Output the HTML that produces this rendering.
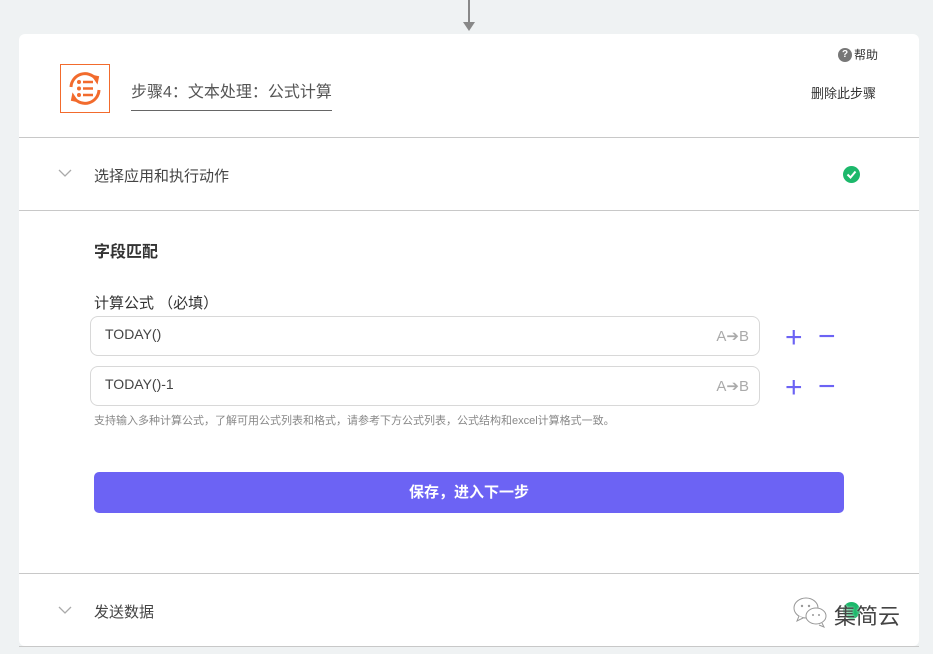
<!DOCTYPE html>
<html><head><meta charset="utf-8"><style>
*{margin:0;padding:0;box-sizing:border-box}
body{width:933px;height:654px;background:#eff2f3;font-family:"Liberation Sans","Noto Sans CJK SC",sans-serif;position:relative;overflow:hidden;color:#333}
.card{position:absolute;left:19px;top:34px;width:900px;height:612px;background:#fff;border-radius:6px}
.abs{position:absolute}
.line{position:absolute;left:0;width:900px;height:1px;background:#c8c8c8}
.inp{position:absolute;left:71px;width:670px;height:40px;border:1px solid #d8d8d8;border-radius:8px;font-size:14px;color:#444;padding:9px 0 0 14px}
.ab{position:absolute;right:10px;top:10px;color:#aaa;font-size:15px}
.pm{position:absolute;color:#6c63f4;font-size:30px;font-weight:300;line-height:20px}
</style></head><body>
<div class="abs" style="left:468px;top:0;width:2px;height:24px;background:#888"></div>
<div class="abs" style="left:463px;top:22px;width:0;height:0;border-left:6px solid transparent;border-right:6px solid transparent;border-top:9px solid #888"></div>
<div class="card">
 <div class="abs" style="left:41px;top:30px;width:50px;height:49px;border:1px solid #f26b2d">
  <svg width="48" height="47" viewBox="0 0 48 47" style="position:absolute;left:0;top:0">
   <path d="M10 22a14 14 0 0 1 25-8" fill="none" stroke="#f26b2d" stroke-width="3"/>
   <path d="M38 25a14 14 0 0 1-25 8" fill="none" stroke="#f26b2d" stroke-width="3"/>
   <path d="M32 11l5 1-1 5z M16 36l-5-1 1-5z" fill="#f26b2d" stroke="#f26b2d" stroke-width="2"/>
   <circle cx="18" cy="17" r="2" fill="#f26b2d"/><circle cx="18" cy="23.5" r="2" fill="#f26b2d"/><circle cx="18" cy="30" r="2" fill="#f26b2d"/>
   <path d="M22 17h10M22 23.5h10M22 30h10" stroke="#f26b2d" stroke-width="2.6"/>
  </svg>
 </div>
 <div class="abs" style="left:112px;top:44px;font-size:16px;color:#555">步骤4：文本处理：公式计算</div>
 <div class="abs" style="left:112px;top:76px;width:201px;height:1px;background:#666"></div>
 <div class="abs" style="left:819px;top:14px;font-size:12px;color:#333;line-height:14px"><span style="display:inline-block;width:14px;height:14px;border-radius:50%;background:#777;color:#fff;font-size:10px;text-align:center;line-height:14px;font-weight:bold;vertical-align:top;margin-right:2px">?</span>帮助</div>
 <div class="abs" style="left:792px;top:49px;font-size:13px;color:#333">删除此步骤</div>
 <div class="line" style="top:103px"></div>
 <svg class="abs" style="left:39px;top:135px" width="14" height="9"><path d="M1 1l6 6 6-6" fill="none" stroke="#aaa" stroke-width="1.3"/></svg>
 <div class="abs" style="left:75px;top:131px;font-size:15px;color:#444">选择应用和执行动作</div>
 <div class="abs" style="left:824px;top:132px;width:17px;height:17px;border-radius:50%;background:#1cb86b"><svg width="17" height="17"><path d="M4.5 8.5l3 3 5-6" fill="none" stroke="#fff" stroke-width="2"/></svg></div>
 <div class="line" style="top:176px"></div>
 <div class="abs" style="left:75px;top:204px;font-size:16px;font-weight:bold;color:#333">字段匹配</div>
 <div class="abs" style="left:75px;top:258px;font-size:15px;color:#333">计算公式 （必填）</div>
 <div class="inp" style="top:282px">TODAY()<span class="ab">A➔B</span></div>
 <div class="pm" style="left:766px;top:294px">+</div><div class="pm" style="left:799px;top:293px">−</div>
 <div class="inp" style="top:332px">TODAY()-1<span class="ab">A➔B</span></div>
 <div class="pm" style="left:766px;top:344px">+</div><div class="pm" style="left:799px;top:343px">−</div>
 <div class="abs" style="left:75px;top:378px;font-size:11px;color:#888">支持输入多种计算公式，了解可用公式列表和格式，请参考下方公式列表，公式结构和excel计算格式一致。</div>
 <div class="abs" style="left:75px;top:438px;width:750px;height:41px;background:#6c63f4;border-radius:5px;color:#fff;font-size:15px;font-weight:bold;text-align:center;line-height:41px">保存，进入下一步</div>
 <div class="line" style="top:539px"></div>
 <svg class="abs" style="left:39px;top:572px" width="14" height="9"><path d="M1 1l6 6 6-6" fill="none" stroke="#aaa" stroke-width="1.3"/></svg>
 <div class="abs" style="left:75px;top:567px;font-size:15px;color:#444">发送数据</div>
 <div class="abs" style="left:824px;top:568px;width:17px;height:17px;border-radius:50%;background:#1cb86b"></div>
 <svg class="abs" style="left:772px;top:561px" width="40" height="34"><ellipse cx="15" cy="13" rx="12" ry="10" fill="#fff" stroke="#999"/><path d="M8 21l-2 5 6-3" fill="#fff" stroke="#999"/><ellipse cx="25" cy="21" rx="10" ry="8" fill="#fff" stroke="#999"/><path d="M31 28l2 4-5-2" fill="#fff" stroke="#999"/><circle cx="11" cy="11" r="1.2" fill="#999"/><circle cx="18" cy="11" r="1.2" fill="#999"/><circle cx="22" cy="20" r="1" fill="#999"/><circle cx="28" cy="20" r="1" fill="#999"/></svg>
 <div class="abs" style="left:815px;top:565px;font-size:22px;color:#444;text-shadow:0 0 2px #fff">集简云</div>
</div>
<div class="abs" style="left:19px;top:646px;width:900px;height:1px;background:#c8c8c8"></div>
</body></html>
